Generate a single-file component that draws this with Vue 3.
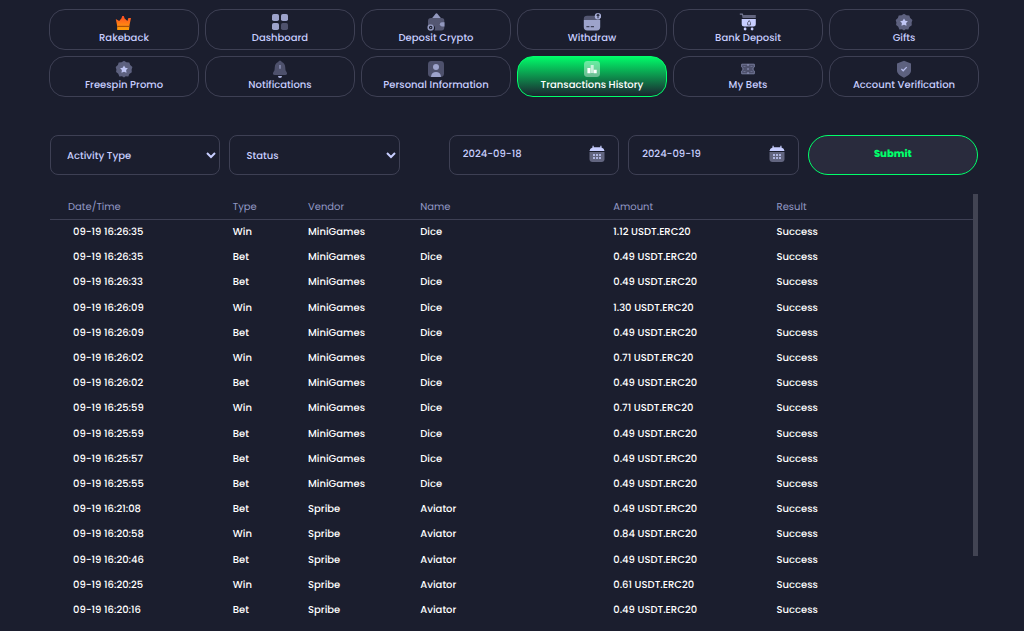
<script setup>
import { ref } from 'vue'

const tabs = [
  { label: 'Rakeback', icon: 'crown' },
  { label: 'Dashboard', icon: 'grid' },
  { label: 'Deposit Crypto', icon: 'wallet' },
  { label: 'Withdraw', icon: 'card' },
  { label: 'Bank Deposit', icon: 'cart' },
  { label: 'Gifts', icon: 'badge' },
  { label: 'Freespin Promo', icon: 'badge' },
  { label: 'Notifications', icon: 'bell' },
  { label: 'Personal Information', icon: 'person' },
  { label: 'Transactions History', icon: 'chart' },
  { label: 'My Bets', icon: 'ticket' },
  { label: 'Account Verification', icon: 'shield' },
]
const active = ref('Transactions History')
const from = ref('2024-09-18')
const to = ref('2024-09-19')

const columns = ['Date/Time', 'Type', 'Vendor', 'Name', 'Amount', 'Result']
const rows = [
  ['16:26:35', 'Win', 'MiniGames', 'Dice', '1.12'],
  ['16:26:35', 'Bet', 'MiniGames', 'Dice', '0.49'],
  ['16:26:33', 'Bet', 'MiniGames', 'Dice', '0.49'],
  ['16:26:09', 'Win', 'MiniGames', 'Dice', '1.30'],
  ['16:26:09', 'Bet', 'MiniGames', 'Dice', '0.49'],
  ['16:26:02', 'Win', 'MiniGames', 'Dice', '0.71'],
  ['16:26:02', 'Bet', 'MiniGames', 'Dice', '0.49'],
  ['16:25:59', 'Win', 'MiniGames', 'Dice', '0.71'],
  ['16:25:59', 'Bet', 'MiniGames', 'Dice', '0.49'],
  ['16:25:57', 'Bet', 'MiniGames', 'Dice', '0.49'],
  ['16:25:55', 'Bet', 'MiniGames', 'Dice', '0.49'],
  ['16:21:08', 'Bet', 'Spribe', 'Aviator', '0.49'],
  ['16:20:58', 'Win', 'Spribe', 'Aviator', '0.84'],
  ['16:20:46', 'Bet', 'Spribe', 'Aviator', '0.49'],
  ['16:20:25', 'Win', 'Spribe', 'Aviator', '0.61'],
  ['16:20:16', 'Bet', 'Spribe', 'Aviator', '0.49'],
]
</script>

<template>
  <main class="page">
    <nav class="tabs" aria-label="Account">
      <button
        v-for="t in tabs"
        :key="t.label"
        type="button"
        class="tab"
        :class="{ active: active === t.label }"
        @click="active = t.label"
      >
        <svg class="icon" viewBox="0 0 18 18" aria-hidden="true">
          <g v-if="t.icon === 'crown'">
            <defs>
              <linearGradient id="crown-fill" x1="0" y1="0" x2="0" y2="1">
                <stop offset="0" stop-color="#ff4b24" />
                <stop offset="1" stop-color="#ffa408" />
              </linearGradient>
            </defs>
            <path d="M.8 6.100 4.200 7.900 6.500 5.300 7.200 3h1.600l.8 2.400 2.800 2.500 1-2.800H16l-1.500 6.800-.5 5H2.500l-.5-4.800z" fill="url(#crown-fill)" />
            <path d="M2.200 12.800h12V14h-12z" fill="#a94f0b" />
            <path d="M2.400 14.800H14v2.200H2.400z" fill="#ff990a" />
          </g>
          <g v-else-if="t.icon === 'grid'">
            <rect x="1" y="1" width="7" height="7" rx="1.8" fill="#9da3cb" />
            <rect x="10" y="1" width="7" height="7" rx="1.8" fill="#9da3cb" />
            <rect x="1" y="10" width="7" height="7" rx="1.8" fill="#9da3cb" />
            <rect x="10" y="10" width="7" height="7" rx="1.8" fill="#4e516c" />
          </g>
          <g v-else-if="t.icon === 'wallet'">
            <path d="M4.8 5.4 8.4.9a1.5 1.5 0 0 1 2.2 0l3.6 4.5z" fill="#9399bf" />
            <path d="M4 5h10.5A2.8 2.8 0 0 1 17.3 8v6.5a3 3 0 0 1-3 3H7.5a4 4 0 0 0-5.7-5.3L1 12V8a3 3 0 0 1 3-3z" fill="#545772" />
            <path d="M17.5 9.3h-2.6a2 2 0 0 0 0 4.1h2.6z" fill="#9399bf" />
            <circle cx="3.7" cy="14.6" r="2.5" fill="#1b1e2e" stroke="#9399bf" stroke-width="1.5" />
            <circle cx="3.7" cy="14.6" r=".7" fill="#9399bf" />
          </g>
          <g v-else-if="t.icon === 'card'">
            <path d="M.8 6a3.3 3.3 0 0 1 3.3-3.3h10A3 3 0 0 1 17 6v1H.8z" fill="#545772" />
            <path d="M.8 7h16.4v7a3.4 3.4 0 0 1-3.4 3.4H4.2A3.4 3.4 0 0 1 .8 14z" fill="#9da3cb" />
            <path d="M3.4 13.6h3M7.8 13.6H11" stroke="#3e4159" stroke-width="1.3" />
            <circle cx="15" cy="3.2" r="3.2" fill="#aab0da" />
            <path d="M15 5.2V1.4M13.6 2.7 15 1.2l1.4 1.5" fill="none" stroke="#292c41" stroke-width="1.1" />
          </g>
          <g v-else-if="t.icon === 'cart'">
            <path d="M.8 1.2h2.5l1.1 2.5" fill="none" stroke="#777b96" stroke-width="1.2" />
            <path d="M3.4 2h13.4v3H3.4z" fill="#62657f" />
            <path d="M2.7 6h14.1v5.3a2.2 2.2 0 0 1-2.2 2.2H5.2A2.5 2.5 0 0 1 2.7 11z" fill="#c8ceff" />
            <path d="M8.6 12V9.8L10.2 7.500l1.3 2.200V12z" fill="none" stroke="#62657f" />
            <circle cx="6.1" cy="16" r="1.4" fill="#c8ceff" />
            <circle cx="13.1" cy="16" r="1.4" fill="#c8ceff" />
          </g>
          <g v-else-if="t.icon === 'badge'">
            <path d="m9 .7 2.4 1.6 2.9.1.9 2.7 2.2 1.8L16.6 9.7l.2 2.5-2.5 1.7-1 2.5-2.6-.1L9 17.6l-2-1.3-2.7.1-1-2.6-2.2-1.7.3-2.5L.7 7l2.2-1.9.8-2.7 2.9-.1z" fill="#5d617f" />
            <path d="m9 5.4 1.300 2.400 2.600.4-1.800 1.900.4 2.700L9 11.800l-2.500 1 .4-2.700-1.800-1.900 2.600-.4z" fill="#c0c6f4" />
          </g>
          <g v-else-if="t.icon === 'bell'">
            <path d="M9 .7c1 0 1.5.5 1.7 1.3C13 2.8 14 4.6 14.2 7l.3 3.3 1.3 2.2c.7 1.4 0 2.4-1.5 2.4H3.7c-1.5 0-2.2-1-1.5-2.4l1.3-2.2L3.8 7C4 4.6 5 2.8 7.3 2 7.5 1.2 8 .7 9 .7z" fill="#4e516c" />
            <path d="M9 5v3.8" stroke="#999fc7" stroke-width="1.2" />
            <path d="M7 16h4a2 2 0 0 1-4 0z" fill="#abb1dc" />
          </g>
          <g v-else-if="t.icon === 'person'">
            <rect x="1" y="1" width="16" height="16" rx="3.4" fill="#4e516c" />
            <circle cx="9" cy="7.1" r="3" fill="#9da3cb" />
            <path d="M4 17c.2-3.4 2-5 5-5s4.800 1.600 5 5z" fill="#9da3cb" />
          </g>
          <g v-else-if="t.icon === 'chart'">
            <rect x="1" y="1" width="16" height="16" rx="3.4" fill="#fff" fill-opacity=".4" />
            <path d="M7.7 5h3v8h-3z" fill="#fff" fill-opacity=".65" />
            <path d="M4.4 8h3v5.300h-3zM10.700 9.700h3v3.600h-3z" fill="#fff" />
          </g>
          <g v-else-if="t.icon === 'ticket'">
            <path d="M2.7 4.200h12.600v2.900a2 2 0 0 0 0 3.800v2.900H2.700v-2.900a2 2 0 0 0 0-3.800z" fill="#4e516c" stroke="#777c9d" />
            <path d="M9 4v2M9 8v2M9 12v2" stroke="#9399bf" />
            <path d="M4.500 6.500h2M11.500 6.500h2M4.500 11.500h2M11.500 11.500h2" stroke="#777c9d" stroke-width=".7" />
          </g>
          <g v-else>
            <path d="m9 .7 7 2.900v7.200c0 3-3.300 5.200-7 6.900-3.700-1.700-7-3.900-7-6.900V3.600z" fill="#5d617f" />
            <path d="m6.400 9 1.800 1.800 3.500-3.700" fill="none" stroke="#b6bcea" stroke-width="1.300" />
          </g>
        </svg>
        <span>{{ t.label }}</span>
      </button>
    </nav>

    <form class="filters" @submit.prevent>
      <div class="field">
        <select aria-label="Activity Type">
          <option>Activity Type</option>
          <option>Bet</option>
          <option>Win</option>
        </select>
        <svg class="chevron" viewBox="0 0 10 8" aria-hidden="true">
          <path d="m1 2 4 4 4-4" fill="none" stroke="#c8ceff" stroke-width="2" />
        </svg>
      </div>
      <div class="field">
        <select aria-label="Status">
          <option>Status</option>
          <option>Success</option>
        </select>
        <svg class="chevron" viewBox="0 0 10 8" aria-hidden="true">
          <path d="m1 2 4 4 4-4" fill="none" stroke="#c8ceff" stroke-width="2" />
        </svg>
      </div>
      <div class="field from">
        <input v-model="from" type="text" aria-label="From date" />
        <svg class="calendar" viewBox="0 0 18 18" aria-hidden="true">
          <path d="M1.500 7h15v7a3 3 0 0 1-3 3h-9a3 3 0 0 1-3-3z" fill="#62657f" />
          <path d="M1.500 6a4 4 0 0 1 3-3.500V.700h1.200v1.600h6.600V.700h1.200v1.800a4 4 0 0 1 3 3.500z" fill="#c8ceff" />
          <path d="M5 10h8M5 13h8" stroke="#c8ceff" stroke-width="1.500" stroke-dasharray="2 1" />
        </svg>
      </div>
      <div class="field">
        <input v-model="to" type="text" aria-label="To date" />
        <svg class="calendar" viewBox="0 0 18 18" aria-hidden="true">
          <path d="M1.500 7h15v7a3 3 0 0 1-3 3h-9a3 3 0 0 1-3-3z" fill="#62657f" />
          <path d="M1.500 6a4 4 0 0 1 3-3.500V.700h1.200v1.600h6.600V.700h1.200v1.800a4 4 0 0 1 3 3.500z" fill="#c8ceff" />
          <path d="M5 10h8M5 13h8" stroke="#c8ceff" stroke-width="1.500" stroke-dasharray="2 1" />
        </svg>
      </div>
      <button class="submit" type="submit">Submit</button>
    </form>

    <section class="history">
      <table>
        <colgroup>
          <col class="c-date" /><col class="c-type" /><col class="c-vendor" />
          <col class="c-name" /><col class="c-amount" /><col />
        </colgroup>
        <thead>
          <tr><th v-for="c in columns" :key="c" scope="col">{{ c }}</th></tr>
        </thead>
        <tbody>
          <tr v-for="(r, i) in rows" :key="i">
            <td>09-19 {{ r[0] }}</td>
            <td>{{ r[1] }}</td>
            <td>{{ r[2] }}</td>
            <td>{{ r[3] }}</td>
            <td>{{ r[4] }} USDT.ERC20</td>
            <td>Success</td>
          </tr>
        </tbody>
      </table>
      <div class="scroll-thumb" aria-hidden="true"></div>
    </section>
  </main>
</template>

<style>
body {
  background: #1b1e2e;
}
</style>

<style scoped>
.page,
.page button,
.page input,
.page select {
  font-family: Poppins, Inter, "Liberation Sans", sans-serif;
  text-rendering: geometricPrecision;
}
.page {
  box-sizing: border-box;
  padding: 9px 45px 0 49px;
  color: #c8ceff;
}
.tabs {
  display: grid;
  grid-template-columns: repeat(6, 1fr);
  gap: 6px;
}
.tab {
  display: flex;
  flex-direction: column;
  align-items: center;
  height: 41px;
  padding: 3px 0 0;
  border: 1px solid #3e4054;
  border-radius: 16px;
  background: transparent;
  color: #c8ceff;
  font-size: 10px;
  font-weight: 500;
  line-height: 14px;
  white-space: nowrap;
}
.tab.active {
  border-color: #00ff6a;
  background: linear-gradient(#00ff6a, #1b1e2e);
  background-origin: border-box;
  color: #fff;
}
.icon {
  width: 18px;
  height: 18px;
  flex: none;
}
.filters {
  display: grid;
  grid-template-columns: 1fr 1fr 31px 1fr 1fr 1fr;
  gap: 9px;
  margin: 38px 1px 0;
}
.field {
  position: relative;
  min-width: 0;
}
.from {
  grid-column: 4;
}
.field select,
.field input {
  box-sizing: border-box;
  display: block;
  width: 100%;
  height: 40px;
  margin: 0;
  border: 1px solid #3e4054;
  border-radius: 8px;
  background: transparent;
  color: #c8ceff;
  font-size: 10px;
  font-weight: 500;
  appearance: none;
}
.field select {
  padding: 0 24px 0 16px;
}
.field input {
  padding: 0 40px 2px 13px;
}
.chevron {
  position: absolute;
  top: 16px;
  right: 4px;
  width: 10px;
  height: 8px;
  pointer-events: none;
}
.calendar {
  position: absolute;
  top: 10px;
  right: 13px;
  width: 18px;
  height: 18px;
}
.submit {
  height: 40px;
  padding: 0 0 2px;
  border: 1px solid #00ff6a;
  border-radius: 20px;
  background: #292b3d;
  color: #00ff6a;
  font-size: 10px;
  font-weight: 800;
}
.history {
  position: relative;
  margin: 19px 1px 0;
}
table {
  width: 100%;
  height: 429px;
  border-collapse: separate;
  border-spacing: 0;
  table-layout: fixed;
}
.c-date { width: 19.7%; }
.c-type { width: 8.1%; }
.c-vendor { width: 12.1%; }
.c-name { width: 20.8%; }
.c-amount { width: 17.6%; }
th,
td {
  padding: 0;
  font-size: 10px;
  line-height: 14px;
  text-align: left;
  white-space: nowrap;
}
th {
  height: 25px;
  border-bottom: 1px solid #3e4054;
  color: #9198c4;
  font-weight: 400;
}
td {
  padding-bottom: 1px;
  color: #fff;
  font-weight: 500;
}
th:first-child {
  padding-left: 18px;
}
td:first-child {
  padding-left: 23px;
}
.scroll-thumb {
  position: absolute;
  top: 0;
  right: 0;
  width: 5px;
  height: 362px;
  background: #424453;
}
</style>
